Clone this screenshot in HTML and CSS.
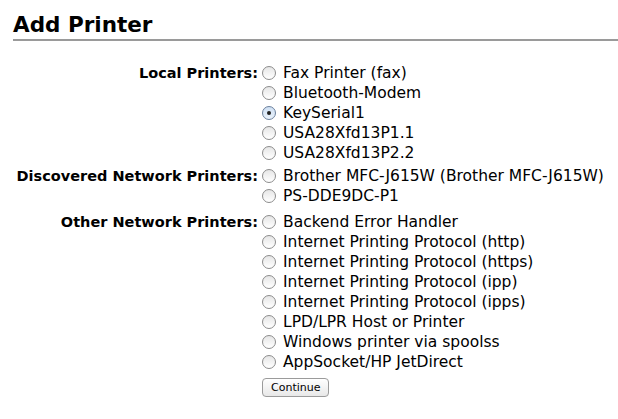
FILE: index.html
```html
<!DOCTYPE html>
<html>
<head>
<meta charset="utf-8">
<link rel="stylesheet" href="styles.css">
</head>
<body>
<h2 class="title">Add Printer</h2>
<form class="form">
  <div class="group">
    <div class="label">Local Printers:</div>
    <div class="options">
      <label class="opt"><span class="radio"></span>Fax Printer (fax)</label>
      <label class="opt"><span class="radio"></span>Bluetooth-Modem</label>
      <label class="opt"><span class="radio checked"></span>KeySerial1</label>
      <label class="opt"><span class="radio"></span>USA28Xfd13P1.1</label>
      <label class="opt"><span class="radio"></span>USA28Xfd13P2.2</label>
    </div>
  </div>
  <div class="group group-wide">
    <div class="label">Discovered Network Printers:</div>
    <div class="options">
      <label class="opt"><span class="radio"></span>Brother MFC-J615W (Brother MFC-J615W)</label>
      <label class="opt"><span class="radio"></span>PS-DDE9DC-P1</label>
    </div>
  </div>
  <div class="group">
    <div class="label">Other Network Printers:</div>
    <div class="options">
      <label class="opt"><span class="radio"></span>Backend Error Handler</label>
      <label class="opt"><span class="radio"></span>Internet Printing Protocol (http)</label>
      <label class="opt"><span class="radio"></span>Internet Printing Protocol (https)</label>
      <label class="opt"><span class="radio"></span>Internet Printing Protocol (ipp)</label>
      <label class="opt"><span class="radio"></span>Internet Printing Protocol (ipps)</label>
      <label class="opt"><span class="radio"></span>LPD/LPR Host or Printer</label>
      <label class="opt"><span class="radio"></span>Windows printer via spoolss</label>
      <label class="opt"><span class="radio"></span>AppSocket/HP JetDirect</label>
    </div>
  </div>
  <div class="group">
    <div class="label"></div>
    <div class="options"><button type="button" class="btn">Continue</button></div>
  </div>
</form>
</body>
</html>
```
FILE: styles.css
```css
html, body { margin: 0; padding: 0; background: #fff; }
body {
  font-family: "DejaVu Sans", "Liberation Sans", sans-serif;
  color: #000;
  padding: 0 0 0 13px;
}
.title {
  margin: 0;
  padding-top: 12px;
  font-size: 21.5px;
  font-weight: bold;
  line-height: 26px;
  border-bottom: 2px solid #9a9a9a;
  padding-bottom: 1px;
}
.form { margin-top: 22px; }
.group {
  display: grid;
  grid-template-columns: 245px auto;
  column-gap: 4px;
  margin-bottom: 3px;
}
.group-wide { margin-bottom: 6px; }
.label {
  text-align: right;
  font-weight: bold;
  font-size: 14.5px;
  line-height: 20px;
}
.options { display: flex; flex-direction: column; }
.opt {
  display: flex;
  align-items: center;
  font-size: 15.5px;
  line-height: 20px;
  height: 20px;
  white-space: nowrap;
}
.radio {
  width: 12px;
  height: 12px;
  border: 1px solid #8c8c8c;
  border-radius: 50%;
  background: linear-gradient(#e6e6e6, #fff);
  margin-right: 7px;
  position: relative;
  flex: none;
}
.radio.checked {
  background: linear-gradient(#cfe0f4, #eaf2fb);
  border-color: #6a7f9c;
}
.radio.checked::after {
  content: "";
  position: absolute;
  left: 4px; top: 4px;
  width: 4px; height: 4px;
  border-radius: 50%;
  background: #222;
}
.btn {
  margin-top: 3px;
  align-self: flex-start;
  font-family: "DejaVu Sans", sans-serif;
  font-size: 11px;
  height: 19px;
  padding: 0 8px;
  border: 1px solid #9b9b9b;
  border-radius: 4px;
  background: linear-gradient(#fff, #e8e8e8);
  color: #000;
}
```
